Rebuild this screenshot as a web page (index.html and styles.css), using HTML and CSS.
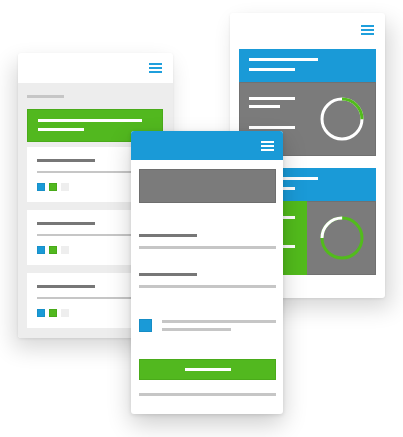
FILE: index.html
```html
<!DOCTYPE html>
<html lang="en">
<head>
<meta charset="utf-8">
<title>Mobile layouts</title>
<link rel="stylesheet" href="styles.css">
</head>
<body>
<div class="stage">

  <div class="phone phone-left">
    <div class="phone-head">
      <span class="burger burger-blue"><i></i><i></i><i></i></span>
    </div>
    <div class="phone-body body-gray">
      <div class="bar bar-light w37"></div>
      <div class="hero-green">
        <div class="bar bar-white w104"></div>
        <div class="bar bar-white w46"></div>
      </div>
      <div class="list-card">
        <div class="bar bar-dark w58"></div>
        <div class="bar bar-light thin wfull"></div>
        <div class="swatches"><span class="sw sw-blue"></span><span class="sw sw-green"></span><span class="sw sw-pale"></span></div>
      </div>
      <div class="list-card">
        <div class="bar bar-dark w58"></div>
        <div class="bar bar-light thin wfull"></div>
        <div class="swatches"><span class="sw sw-blue"></span><span class="sw sw-green"></span><span class="sw sw-pale"></span></div>
      </div>
      <div class="list-card">
        <div class="bar bar-dark w58"></div>
        <div class="bar bar-light thin wfull"></div>
        <div class="swatches"><span class="sw sw-blue"></span><span class="sw sw-green"></span><span class="sw sw-pale"></span></div>
      </div>
    </div>
  </div>

  <div class="phone phone-right">
    <div class="phone-head head-right">
      <span class="burger burger-blue"><i></i><i></i><i></i></span>
    </div>
    <div class="phone-body body-right">
      <div class="stat-card">
        <div class="stat-top">
          <div class="bar bar-white w69"></div>
          <div class="bar bar-white w46"></div>
        </div>
        <div class="stat-bottom">
          <div class="stat-left">
            <div class="bar bar-white w46"></div>
            <div class="bar bar-white w31 gap5"></div>
            <div class="bar bar-white w46 gap18"></div>
          </div>
          <div class="stat-right">
            <svg class="ring" width="46" height="46" viewBox="0 0 46 46">
              <circle cx="23" cy="23" r="20" fill="none" stroke="#ffffff" stroke-width="3"/>
              <circle cx="23" cy="23" r="20" fill="none" stroke="#52bb1c" stroke-width="3" stroke-dasharray="31.4 125.7" transform="rotate(-90 23 23)"/>
            </svg>
          </div>
        </div>
      </div>
      <div class="stat-card second">
        <div class="stat-top">
          <div class="bar bar-white w69"></div>
          <div class="bar bar-white w46"></div>
        </div>
        <div class="stat-bottom">
          <div class="stat-left left-green">
            <div class="bar bar-white w46"></div>
            <div class="bar bar-white w31 gap5"></div>
            <div class="bar bar-white w46 gap18"></div>
          </div>
          <div class="stat-right">
            <svg class="ring" width="46" height="46" viewBox="0 0 46 46">
              <circle cx="23" cy="23" r="20" fill="none" stroke="#52bb1c" stroke-width="3"/>
              <circle cx="23" cy="23" r="20" fill="none" stroke="#ffffff" stroke-width="3" stroke-dasharray="31.4 125.7" transform="rotate(180 23 23)"/>
            </svg>
          </div>
        </div>
      </div>
    </div>
  </div>

  <div class="phone phone-mid">
    <div class="phone-head head-blue">
      <span class="burger burger-white"><i></i><i></i><i></i></span>
    </div>
    <div class="phone-body body-mid">
      <div class="media-box"></div>
      <div class="bar bar-dark w58 mt31"></div>
      <div class="bar bar-light wfull mt9"></div>
      <div class="bar bar-dark w58 mt24"></div>
      <div class="bar bar-light wfull mt9"></div>
      <div class="check-row">
        <span class="check"></span>
        <div class="check-lines">
          <div class="bar bar-light wfull"></div>
          <div class="bar bar-light w69"></div>
        </div>
      </div>
      <div class="btn-green"><div class="bar bar-white w46"></div></div>
      <div class="bar bar-light wfull mt13"></div>
    </div>
  </div>

</div>
</body>
</html>
```

FILE: styles.css
```css
html, body {
  margin: 0;
  padding: 0;
  background: #ffffff;
  font-family: "Liberation Sans", Arial, sans-serif;
}

.stage {
  position: relative;
  width: 403px;
  height: 437px;
  overflow: hidden;
}

.phone {
  position: absolute;
  display: flex;
  flex-direction: column;
  background: #ffffff;
  border-radius: 3px;
  overflow: hidden;
}

.phone-left {
  left: 18px;
  top: 53px;
  width: 155px;
  height: 285px;
  box-shadow: -4px 10px 22px rgba(0, 0, 0, 0.16), 0 1px 3px rgba(0, 0, 0, 0.08);
}

.phone-right {
  left: 230px;
  top: 13px;
  width: 155px;
  height: 285px;
  box-shadow: 6px 10px 22px rgba(0, 0, 0, 0.16), 0 1px 3px rgba(0, 0, 0, 0.08);
}

.phone-mid {
  left: 131px;
  top: 131px;
  width: 152px;
  height: 283px;
  box-shadow: 0 10px 24px rgba(0, 0, 0, 0.2), 0 1px 4px rgba(0, 0, 0, 0.12);
  z-index: 2;
}

.phone-head {
  flex: none;
  height: 30px;
  display: flex;
  align-items: center;
  justify-content: flex-end;
  padding-right: 11px;
  box-sizing: border-box;
}

.head-right {
  padding-top: 3px;
}

.head-blue {
  height: 29px;
  background: #1a9ad7;
  padding-right: 9px;
}

.burger {
  display: flex;
  flex-direction: column;
  gap: 2px;
  width: 13px;
}

.burger i {
  display: block;
  height: 2px;
}

.burger-blue i { background: #1f9fdc; }
.burger-white i { background: #ffffff; }

.phone-body {
  flex: 1;
  display: flex;
  flex-direction: column;
  align-items: flex-start;
}

.body-gray {
  background: #ededed;
  padding: 12px 10px 0 9px;
}

.bar {
  height: 3px;
  flex: none;
}

.bar-light { background: #c6c6c6; }
.bar-dark { background: #777777; }
.bar-white { background: #ffffff; }

.thin { height: 2px; }

.w31 { width: 31px; }
.w37 { width: 37px; }
.w46 { width: 46px; }
.w58 { width: 58px; }
.w69 { width: 69px; }
.w104 { width: 104px; }
.wfull { align-self: stretch; }

.gap5 { margin-top: 5px; }
.gap18 { margin-top: 18px; }
.mt9 { margin-top: 9px; }
.mt13 { margin-top: 13px; }
.mt24 { margin-top: 24px; }
.mt31 { margin-top: 31px; }

.hero-green {
  align-self: stretch;
  box-sizing: border-box;
  height: 33px;
  margin-top: 11px;
  padding: 10px 10px 0;
  background: #52b81f;
  border: 1px solid #4aab1a;
  display: flex;
  flex-direction: column;
  gap: 6px;
}

.hero-green .bar:first-child { margin-top: -1px; }

.list-card {
  align-self: stretch;
  box-sizing: border-box;
  height: 55px;
  margin-top: 5px;
  padding: 12px 10px 0;
  background: #ffffff;
  display: flex;
  flex-direction: column;
}

.list-card + .list-card { margin-top: 8px; }

.list-card .thin { margin-top: 9px; }

.swatches {
  display: flex;
  gap: 4px;
  margin-top: 10px;
}

.sw {
  width: 8px;
  height: 8px;
  box-sizing: border-box;
}

.sw-blue { background: #1a9ad7; border: 1px solid #1890c9; }
.sw-green { background: #52b81f; border: 1px solid #49aa1a; }
.sw-pale { background: #eeeeee; }

.body-right {
  padding: 6px 9px 0;
}

.stat-card {
  align-self: stretch;
  display: flex;
  flex-direction: column;
}

.stat-card.second { margin-top: 12px; }

.stat-top {
  height: 33px;
  box-sizing: border-box;
  padding: 9px 10px 0;
  background: #1a9ad7;
  display: flex;
  flex-direction: column;
  gap: 7px;
}

.stat-bottom {
  height: 74px;
  display: flex;
  background: #7b7b7b;
  box-shadow: inset 0 0 0 1px rgba(0, 0, 0, 0.08);
}

.stat-left {
  width: 68px;
  box-sizing: border-box;
  padding: 15px 10px 0;
  display: flex;
  flex-direction: column;
}

.left-green {
  background: #52bb1c;
}

.stat-right {
  flex: 1;
  display: flex;
  align-items: center;
  justify-content: center;
}

.ring { display: block; }

.body-mid {
  padding: 9px 7px 0 8px;
}

.media-box {
  align-self: stretch;
  height: 34px;
  box-sizing: border-box;
  background: #7b7b7b;
  border: 1px solid #6e6e6e;
}

.check-row {
  align-self: stretch;
  margin-top: 31px;
  display: flex;
  gap: 10px;
}

.check {
  flex: none;
  width: 13px;
  height: 13px;
  box-sizing: border-box;
  background: #1a9ad7;
  border: 1px solid #168dc6;
}

.check-lines {
  flex: 1;
  display: flex;
  flex-direction: column;
  align-items: flex-start;
  gap: 5px;
  padding-top: 1px;
}

.btn-green {
  align-self: stretch;
  height: 21px;
  margin-top: 27px;
  box-sizing: border-box;
  background: #52b81f;
  border: 1px solid #4aab1a;
  display: flex;
  align-items: center;
  justify-content: center;
}
```
